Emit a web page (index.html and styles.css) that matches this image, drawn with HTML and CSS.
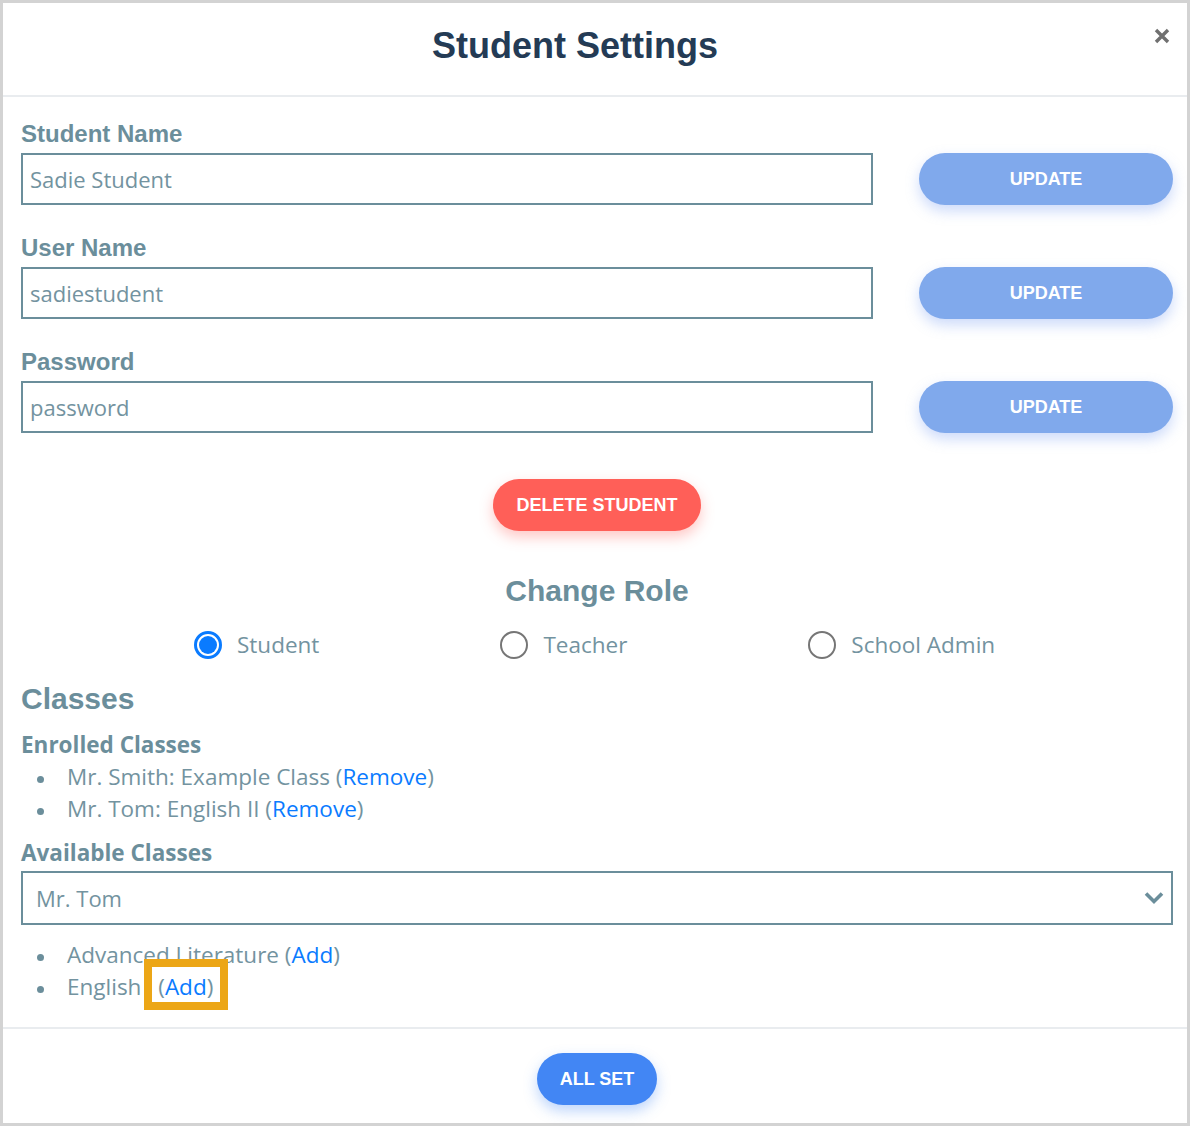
FILE: index.html
```html
<!DOCTYPE html>
<html lang="en">
<head>
<meta charset="utf-8">
<title>Student Settings</title>
<link rel="stylesheet" href="styles.css">
</head>
<body>
<div class="modal">
  <header class="modal-header">
    <h1 class="title">Student Settings</h1>
    <button class="close" aria-label="Close">
      <svg width="16" height="16" viewBox="0 0 16 16"><path d="M2 2 L14 14 M14 2 L2 14" stroke="#707070" stroke-width="3.4" stroke-linecap="butt" fill="none"/></svg>
    </button>
  </header>
  <main class="modal-body">
    <div class="field">
      <label class="label">Student Name</label>
      <div class="field-row">
        <div class="input">Sadie Student</div>
        <button class="btn btn-update">UPDATE</button>
      </div>
    </div>
    <div class="field">
      <label class="label">User Name</label>
      <div class="field-row">
        <div class="input">sadiestudent</div>
        <button class="btn btn-update">UPDATE</button>
      </div>
    </div>
    <div class="field">
      <label class="label">Password</label>
      <div class="field-row">
        <div class="input">password</div>
        <button class="btn btn-update">UPDATE</button>
      </div>
    </div>
    <div class="center">
      <button class="btn btn-delete">DELETE STUDENT</button>
    </div>
    <h2 class="section-title center-text">Change Role</h2>
    <div class="roles">
      <label class="role"><span class="radio checked"></span>Student</label>
      <label class="role"><span class="radio"></span>Teacher</label>
      <label class="role"><span class="radio"></span>School Admin</label>
    </div>
    <h2 class="section-title">Classes</h2>
    <h3 class="sub-title">Enrolled Classes</h3>
    <ul class="list">
      <li>Mr. Smith: Example Class (<a class="link">Remove</a>)</li>
      <li>Mr. Tom: English II (<a class="link">Remove</a>)</li>
    </ul>
    <h3 class="sub-title">Available Classes</h3>
    <div class="select">
      <span>Mr. Tom</span>
      <svg class="chevron" width="20" height="14" viewBox="0 0 20 14"><path d="M2 2.5 L10 10.5 L18 2.5" stroke="#6b8e9b" stroke-width="3.6" fill="none"/></svg>
    </div>
    <ul class="list list-available">
      <li>Advanced Literature (<a class="link">Add</a>)</li>
      <li>English <span class="hl"><span class="hl-text">(<a class="link">Add</a>)</span></span></li>
    </ul>
  </main>
  <footer class="modal-footer">
    <button class="btn btn-allset">ALL SET</button>
  </footer>
</div>
</body>
</html>
```

FILE: styles.css
```css
* { box-sizing: border-box; }
html, body { margin: 0; padding: 0; background: #fff; }
body { font-family: "Open Sans", "Liberation Sans", sans-serif; }

.modal {
  width: 1190px;
  height: 1126px;
  border: 3px solid #d3d3d3;
  display: flex;
  flex-direction: column;
  background: #fff;
}

.modal-header {
  height: 94px;
  padding: 21px 14px 0 18px;
  border-bottom: 2px solid #e9ecef;
  display: flex;
  align-items: flex-start;
}
.title {
  flex: 1;
  margin: 0;
  text-align: center;
  font-family: "Liberation Sans", Arial, sans-serif;
  font-weight: bold;
  font-size: 36px;
  line-height: 43px;
  color: #243b55;
}
.close {
  width: 44px;
  padding: 0 3px 0 0;
  margin-top: 4px;
  border: 0;
  background: transparent;
  display: flex;
  justify-content: flex-end;
}
.close svg { display: block; }

.modal-body {
  flex: 1;
  padding: 22px 14px 0 18px;
}

.field { margin-bottom: 28px; }
.label {
  display: block;
  font-family: "Liberation Sans", Arial, sans-serif;
  font-weight: bold;
  font-size: 24px;
  line-height: 29px;
  color: #6b8e9b;
  margin-bottom: 5px;
}
.field-row {
  display: grid;
  grid-template-columns: 852px 254px;
  column-gap: 46px;
}
.input {
  height: 52px;
  border: 2px solid #6b8e9b;
  padding: 0 7px;
  display: flex;
  align-items: center;
  font-size: 22px;
  color: #7393a0;
}

.btn {
  border: 0;
  border-radius: 26px;
  height: 52px;
  color: #fff;
  font-family: "Liberation Sans", Arial, sans-serif;
  font-weight: bold;
  font-size: 18px;
  padding: 0;
}
.btn-update {
  background: #80a9ec;
  box-shadow: 0 6px 14px rgba(110, 150, 240, 0.35);
}
.center { display: flex; justify-content: center; margin-top: 46px; }
.btn-delete {
  width: 208px;
  background: #ff5f58;
  box-shadow: 0 6px 14px rgba(255, 95, 88, 0.35);
}

.section-title {
  margin: 0;
  font-family: "Liberation Sans", Arial, sans-serif;
  font-weight: bold;
  font-size: 30px;
  line-height: 36px;
  color: #6b8e9b;
}
.center-text { text-align: center; margin-top: 42px; }

.roles {
  display: flex;
  justify-content: flex-start;
  padding-left: 173px;
  gap: 181px;
  margin: 20px 0 20px;
}
.role {
  display: flex;
  align-items: center;
  font-size: 22.5px;
  line-height: 32px;
  color: #7393a0;
}
.radio {
  width: 28px;
  height: 28px;
  border-radius: 50%;
  border: 2px solid #767676;
  margin-right: 15px;
  position: relative;
}
.radio.checked { border: 3px solid #0a7bff; }
.radio.checked::after {
  content: "";
  position: absolute;
  inset: 2px;
  border-radius: 50%;
  background: #0a7bff;
}

.sub-title {
  margin: 12px 0 0;
  font-size: 22.5px;
  line-height: 32px;
  font-weight: 700;
  color: #6b8e9b;
}
.list {
  list-style: none;
  margin: 0;
  padding: 0;
}
.list li {
  position: relative;
  padding-left: 46px;
  font-size: 22.5px;
  line-height: 32px;
  color: #7393a0;
}
.list li::before {
  content: "";
  position: absolute;
  left: 16px;
  top: 15px;
  width: 7px;
  height: 7px;
  border-radius: 50%;
  background: #6b8e9b;
}
.link { color: #0a7bff; text-decoration: none; }

.select {
  height: 54px;
  margin-top: 2px;
  border: 2px solid #6b8e9b;
  padding: 0 7px 0 13px;
  display: flex;
  align-items: center;
  justify-content: space-between;
  font-size: 22px;
  color: #7393a0;
}
.chevron { display: block; }
.list-available { margin-top: 14px; }

.hl { position: relative; margin-left: 11px; }
.hl::before {
  content: "";
  position: absolute;
  left: -14px;
  right: -15px;
  top: -12px;
  bottom: -8px;
  border: 8px solid #eca616;
  background: #fff;
}
.hl-text { position: relative; }

.modal-footer {
  border-top: 2px solid #e9ecef;
  padding: 24px 14px 18px 18px;
  display: flex;
  justify-content: center;
}
.btn-allset {
  width: 120px;
  background: #4286f4;
  box-shadow: 0 6px 14px rgba(66, 134, 244, 0.35);
}
```
